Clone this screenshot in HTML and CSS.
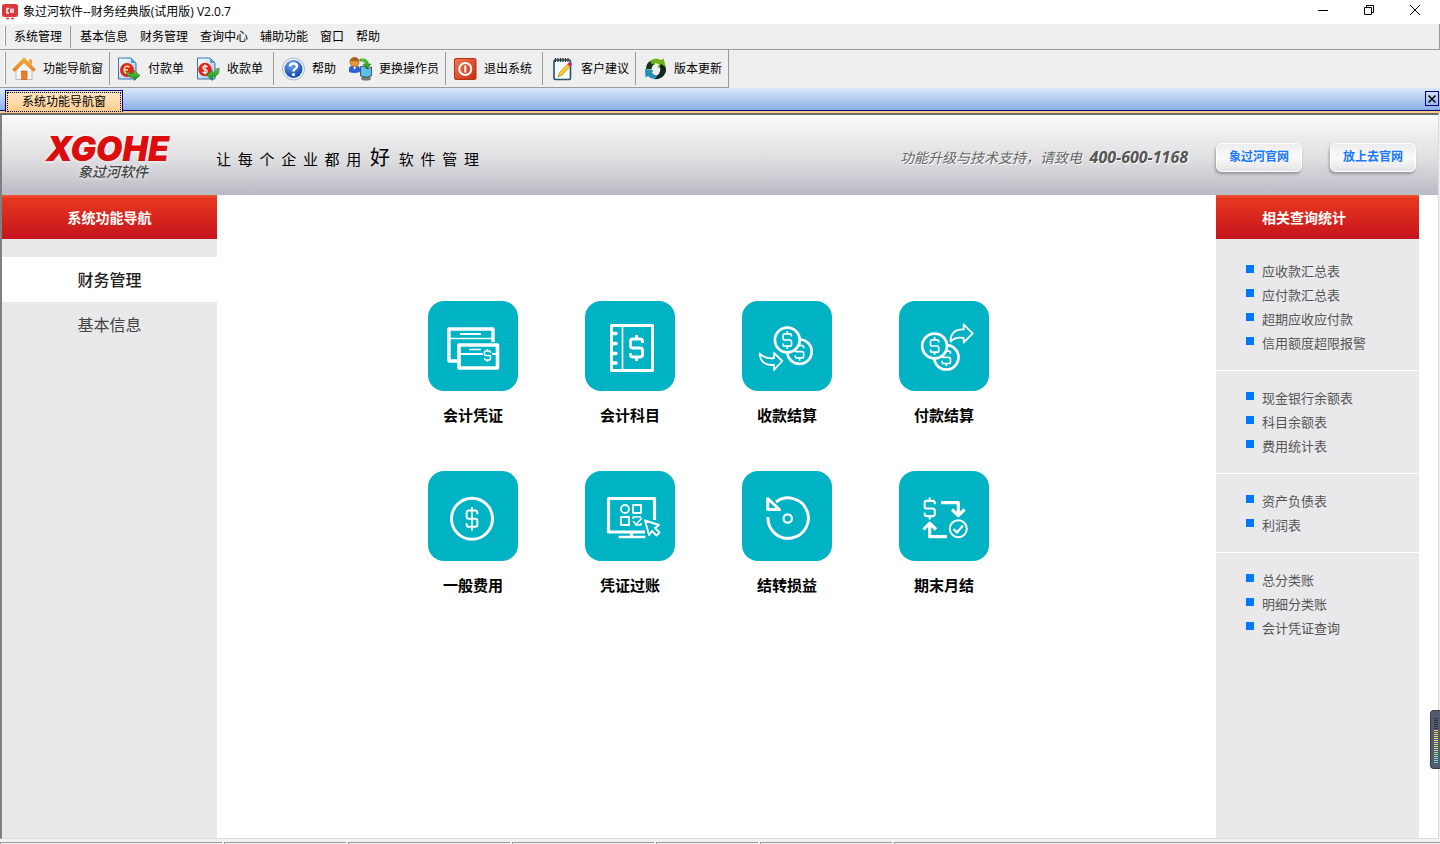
FILE: index.html
```html
<!DOCTYPE html>
<html lang="zh-CN">
<head>
<meta charset="utf-8">
<title>象过河软件--财务经典版(试用版) V2.0.7</title>
<link rel="stylesheet" href="styles.css">
</head>
<body>
<svg class="defs" aria-hidden="true">
  <defs>
    <linearGradient id="gRoof" x1="0" y1="0" x2="0" y2="1"><stop offset="0" stop-color="#ffb52e"/><stop offset="1" stop-color="#f07818"/></linearGradient>
    <linearGradient id="gPage" x1="0" y1="0" x2="1" y2="1"><stop offset="0" stop-color="#ffffff"/><stop offset="1" stop-color="#9cc4ee"/></linearGradient>
    <linearGradient id="gGreen" x1="0" y1="0" x2="0" y2="1"><stop offset="0" stop-color="#6fd23c"/><stop offset="1" stop-color="#0f8a1c"/></linearGradient>
    <radialGradient id="gBlue" cx=".4" cy=".25" r=".8"><stop offset="0" stop-color="#6fa4f0"/><stop offset="1" stop-color="#0a3fae"/></radialGradient>
    <linearGradient id="gRed" x1="0" y1="0" x2="1" y2="1"><stop offset="0" stop-color="#f2795a"/><stop offset="1" stop-color="#c92c0a"/></linearGradient>
    <symbol id="dollar" viewBox="0 0 14 26" overflow="visible"><path d="M13 8V6.500Q13 4 10.500 4H3.500Q1 4 1 6.500V10.500Q1 13 3.500 13H10.500Q13 13 13 15.500V19.500Q13 22 10.500 22H3.500Q1 22 1 19.500V18M7 4V0M7 22V26" fill="none"/></symbol>
  </defs>
</svg>

<header class="titlebar">
  <svg class="app-icon" viewBox="0 0 16 16"><rect width="16" height="13" rx="2.500" fill="#d8393c"/><path d="M7 4.500H5V9H7M9 4.500V9M11 4.500V9M9 6.500H8" fill="none" stroke="#fff" stroke-width="1.400"/><path d="M4 14.500H7M9 14.500H12" stroke="#d8393c" stroke-width="1.500"/></svg>
  <h1>象过河软件--财务经典版(试用版) V2.0.7</h1>
  <div class="win-controls">
    <button aria-label="最小化"><svg viewBox="0 0 12 12"><path d="M1 6.500H11"/></svg></button>
    <button aria-label="还原"><svg viewBox="0 0 12 12"><path d="M1.500 3.500H8.500V10.500H1.500ZM3.500 3.500V1.500H10.500V8.500H8.500"/></svg></button>
    <button aria-label="关闭"><svg viewBox="0 0 12 12"><path d="M1 1L11 11M11 1L1 11"/></svg></button>
  </div>
</header>

<nav class="menubar">
  <span class="grip"></span>
  <button>系统管理</button>
  <span class="menu-sep"></span>
  <button>基本信息</button>
  <button>财务管理</button>
  <button>查询中心</button>
  <button>辅助功能</button>
  <button>窗口</button>
  <button>帮助</button>
</nav>

<div class="toolbar-row">
  <div class="toolbar">
    <span class="grip"></span>
    <div class="group">
      <button><svg viewBox="0 0 24 24"><path d="M4 12L12 5L20 12V22.500H4Z" fill="#f4f4f6" stroke="#b9bbc4"/><path d="M17 2.500H20V8L17 5Z" fill="#f0a030"/><rect x="9.500" y="14" width="5.500" height="8.500" fill="#f07a20" stroke="#c65a10" stroke-width=".6"/><path d="M12 .8L.6 12.500L2.600 14.500L12 5.500L21.400 14.500L23.400 12.500Z" fill="url(#gRoof)" stroke="#e2801c" stroke-width=".6"/></svg>功能导航窗</button>
    </div>
    <div class="group roomy">
      <button><svg viewBox="0 0 24 24"><path d="M1.500 1H14L19 6V22H1.500Z" fill="url(#gPage)" stroke="#3a72b8"/><path d="M14 1V6H19Z" fill="#5c9ae0"/><circle cx="10" cy="13" r="7" fill="#e02818"/><path d="M12.500 10Q9 8 7.500 11V15Q9.500 17.500 12 16M6.500 13H11" fill="none" stroke="#ffe9a8" stroke-width="1.500"/><path d="M9 14Q12 18 17 16.500V13.500L23 18.500L17 23.500V20.500Q10 21 9 14Z" fill="url(#gGreen)" stroke="#137a1c" stroke-width=".6"/></svg>付款单</button>
      <button><svg viewBox="0 0 24 24"><path d="M1.500 1H14L19 6V22H1.500Z" fill="url(#gPage)" stroke="#3a72b8"/><path d="M14 1V6H19Z" fill="#5c9ae0"/><circle cx="9" cy="12.500" r="6.800" fill="#e02818"/><path d="M11.500 10Q9 8 7 10Q6.500 12 9 12.500Q12 13 11 15Q9 17 6.500 15M9 7.500V17.500" fill="none" stroke="#fff" stroke-width="1.200"/><path d="M23 11Q24 19 16.500 20V23.500L10.500 18L16.500 13.500V16.500Q20 16 20.500 12Z" fill="url(#gGreen)" stroke="#137a1c" stroke-width=".6"/></svg>收款单</button>
    </div>
    <div class="group">
      <button><svg viewBox="0 0 24 24"><circle cx="12.500" cy="12" r="11" fill="#f2f5fb" stroke="#a8b4cc"/><circle cx="12.500" cy="12" r="9" fill="url(#gBlue)"/><path d="M9 9.500Q9 6.500 12.500 6.500Q16 6.500 16 9.300Q16 11 14 12Q12.500 12.800 12.500 14.500" fill="none" stroke="#fff" stroke-width="2.500"/><circle cx="12.500" cy="17.600" r="1.600" fill="#fff"/></svg>帮助</button>
      <button><svg viewBox="0 0 24 24"><path d="M1 15V12Q1 9 4 9H9Q12 9 12 12V15Q6 17 1 15Z" fill="#2f62d8"/><path d="M5 9L6.500 13L8.500 9Z" fill="#fff"/><circle cx="6.500" cy="5" r="4.500" fill="#e89a3c" stroke="#a85c14" stroke-width=".8"/><path d="M2 4Q3 0 7 .5Q11 1 11 4.500Q6 4 2 4Z" fill="#a8641c"/><path d="M12 2Q20 1 20.500 7H23L19 12L15 7H17.500Q17 4 12 4Z" fill="url(#gGreen)" stroke="#137a1c" stroke-width=".5"/><ellipse cx="18" cy="21.500" rx="5" ry="2" fill="#777"/><path d="M12.500 9.500L16 9L19 12L23.500 10V19Q18 21.500 12.500 19Z" fill="#5cc0e8" stroke="#445" stroke-width=".9"/></svg>更换操作员</button>
    </div>
    <div class="group roomy">
      <button><svg viewBox="0 0 24 24"><rect x="1.500" y="1.500" width="21.500" height="21" rx="1.500" fill="url(#gRed)" stroke="#b8300c"/><circle cx="12.300" cy="12" r="6" fill="none" stroke="#fff" stroke-width="2"/><path d="M12.300 8.500V15.500" stroke="#fff" stroke-width="2"/></svg>退出系统</button>
    </div>
    <div class="group">
      <button><svg viewBox="0 0 24 24"><rect x="4" y="3" width="16.500" height="19.500" rx="1.500" fill="#f6fbfd" stroke="#1f5466" stroke-width="1.600"/><path d="M5.500 1V5M8 1V5M10.500 1V5M13 1V5M15.500 1V5M18 1V5" stroke="#333" stroke-width="1.200"/><path d="M8 20L9.500 15.500L17.500 7L20 9.500L12 18Z" fill="#f8cc28" stroke="#a87a10" stroke-width=".6"/><path d="M17.500 7L19.500 5Q22 5.500 22 7.500L20 9.500Z" fill="#e01878"/></svg>客户建议</button>
    </div>
    <div class="group">
      <button><svg viewBox="0 0 24 24"><path d="M3 12A10 9.500 0 0 1 8 3.500L12 7Q8.500 8.500 8.500 12.500Z" fill="#16381a"/><path d="M7 4Q12-.5 18 3L20.500 1.500L23 10.500H14.500L16 7.500Q12 5 9 7.500Z" fill="#6fb41c"/><path d="M18.500 7L22.800 10.500Q24 17 18.500 20.500Q15 23 11 22L14 18.500Q19 15 16.500 9Z" fill="#15251b"/><path d="M2 12L10.500 13.500L8.800 15.500Q11 19 15 18L12 22Q8 22.500 5 19L2.500 20.500Z" fill="#2490b8"/></svg>版本更新</button>
    </div>
  </div>
</div>

<div class="tabbar">
  <button class="tab"><span>系统功能导航窗</span></button>
  <button class="tab-close" aria-label="关闭标签"><svg viewBox="0 0 12 12"><path d="M2.500 2.500L9.500 9.500M9.500 2.500L2.500 9.500"/></svg></button>
</div>

<div class="workspace">
  <header class="banner">
    <div class="brand"><strong>XGOHE</strong><em>象过河软件</em></div>
    <p class="slogan">让&nbsp; 每&nbsp; 个&nbsp; 企&nbsp; 业&nbsp; 都&nbsp; 用&nbsp; <big>好</big>&nbsp; 软&nbsp; 件&nbsp; 管&nbsp; 理</p>
    <p class="support">功能升级与技术支持，请致电 <b>400-600-1168</b></p>
    <div class="links"><a href="#">象过河官网</a><a href="#">放上去官网</a></div>
  </header>
  <div class="columns">
    <nav class="sidebar">
      <h2>系统功能导航</h2>
      <a class="active" href="#">财务管理</a>
      <a href="#">基本信息</a>
    </nav>
    <main>
      <div class="tiles">
        <a href="#"><svg viewBox="0 0 90 90"><path d="M29 60H21V28H65V41" stroke-width="3.400"/><path d="M22 37.500H65" stroke-width="1.400"/><path d="M32 33H53" stroke-width="2.200"/><rect x="31" y="44" width="38.500" height="23" stroke-width="3.600"/><path d="M32 53H55M64 53H69" stroke-width="1.800"/><path d="M41 48.500H53" stroke-width="1.400"/><use href="#dollar" x="56" y="48" width="7" height="13" stroke-width="3"/></svg>会计凭证</a>
        <a href="#"><svg viewBox="0 0 90 90"><rect x="26.500" y="24.500" width="41" height="45" stroke-width="3"/><path d="M37.500 25V69" stroke-width="1.600"/><path d="M27 32.500H31M27 42.500H31M27 52.500H31M27 62H31" stroke-width="3.600" stroke-linecap="round"/><use href="#dollar" x="44.500" y="34" width="14" height="26" stroke-width="3"/></svg>会计科目</a>
        <a href="#"><svg viewBox="0 0 90 90"><circle cx="57.500" cy="50.700" r="12.200" stroke-width="2.700"/><use href="#dollar" x="52.500" y="41.700" width="10" height="18" stroke-width="2.400"/><circle class="coin" cx="45.300" cy="39" r="12.400" stroke-width="2.700"/><use href="#dollar" x="40.300" y="30" width="10" height="18" stroke-width="2.500"/><path d="M17.700 52.300Q23 58.500 32 57V52L40.300 60L32 69V63.800C24 65 18 61 17.700 52.300Z" stroke-width="1.800"/></svg>收款结算</a>
        <a href="#"><svg viewBox="0 0 90 90"><circle cx="47.300" cy="56.300" r="12.200" stroke-width="2.700"/><use href="#dollar" x="42.300" y="47.300" width="10" height="18" stroke-width="2.400"/><circle class="coin" cx="35.600" cy="45" r="12.400" stroke-width="2.700"/><use href="#dollar" x="30.600" y="36" width="10" height="18" stroke-width="2.500"/><path d="M51.700 40.700Q56 35.500 64.700 37V41.700L73.700 32.300L64.700 23.500V28.500C56 28 51 33 51.700 40.700Z" stroke-width="1.800"/></svg>付款结算</a>
        <a href="#"><svg viewBox="0 0 90 90"><circle cx="44" cy="47.700" r="20.500" stroke-width="3"/><use href="#dollar" x="37.700" y="35.700" width="12.600" height="24" stroke-width="2.200"/><path d="M44 38V58" stroke-width="1.600"/></svg>一般费用</a>
        <a href="#"><svg viewBox="0 0 90 90"><path d="M69.500 49V27.500H23.500V61H60M46.500 61V66" stroke-width="3.200"/><path d="M33.500 66H60.500" stroke-width="2.600"/><circle cx="40" cy="38" r="4" stroke-width="1.800"/><path d="M48 34H56V42H48ZM36 46H44V54H36Z" stroke-width="1.800"/><path d="M48 48V46H56M50 54H56V52M48 50L51 53.500L57 47" stroke-width="1.400"/><path d="M60 49.500L74 54L70 57L74.500 61.500L71.500 64.500L67 60L64 64Z" stroke-width="1.900"/></svg>凭证过账</a>
        <a href="#"><svg viewBox="0 0 90 90"><path d="M26 46A20.200 20.200 0 1 0 34 31" stroke-width="3"/><path d="M25.700 27.500V38.500H37.500Z" stroke-width="3"/><circle cx="45.700" cy="47.500" r="4.200" stroke-width="2.200"/></svg>结转损益</a>
        <a href="#"><svg viewBox="0 0 90 90"><use href="#dollar" x="24.700" y="26.500" width="12" height="22" stroke-width="2.400"/><path d="M42 31.700H59.300V43M53 38.500L59.300 44.700L65.500 38.500M48 65.700H30.700V53M24.500 58.500L30.700 52.200L37 58.500" stroke-width="3.200"/><circle cx="59.300" cy="57.700" r="8.500" stroke-width="2"/><path d="M54.500 58L58 61.500L64 54.500" stroke-width="2.200"/></svg>期末月结</a>
      </div>
    </main>
    <aside class="reports">
      <h2>相关查询统计</h2>
      <ul><li><a href="#">应收款汇总表</a></li><li><a href="#">应付款汇总表</a></li><li><a href="#">超期应收应付款</a></li><li><a href="#">信用额度超限报警</a></li></ul>
      <ul><li><a href="#">现金银行余额表</a></li><li><a href="#">科目余额表</a></li><li><a href="#">费用统计表</a></li></ul>
      <ul><li><a href="#">资产负债表</a></li><li><a href="#">利润表</a></li></ul>
      <ul><li><a href="#">总分类账</a></li><li><a href="#">明细分类账</a></li><li><a href="#">会计凭证查询</a></li></ul>
    </aside>
  </div>
</div>

<footer class="statusbar"><span></span><span></span><span></span><span></span><span></span><span></span><span></span></footer>
<div class="meter"><i></i></div>
</body>
</html>
```

FILE: styles.css
```css
* { box-sizing: border-box; }

body {
  margin: 0;
  min-height: 100vh;
  display: flex;
  flex-direction: column;
  background: #efefef;
  color: #000;
  font: 12px/18px "Open Sans", "Noto Sans CJK SC", sans-serif;
}

h1, h2, p, ul { margin: 0; padding: 0; font: inherit; }
ul { list-style: none; }
a { color: inherit; text-decoration: none; }
button { margin: 0; padding: 0; border: 0; background: none; color: inherit; font: inherit; white-space: nowrap; }
svg { display: block; flex: none; }
.defs { position: absolute; width: 0; height: 0; }

/* Title bar */
.titlebar { display: flex; align-items: center; height: 24px; padding-left: 2px; background: #fff; }
.app-icon { width: 16px; height: 16px; margin-right: 5px; }
.win-controls { display: flex; margin-left: auto; align-self: stretch; padding: 0 2px 4px 0; }
.win-controls button { display: grid; place-items: center; width: 46px; }
.win-controls svg, .tab-close svg { width: 12px; height: 12px; fill: none; stroke: #000; }

/* Menu bar */
.menubar {
  display: flex;
  align-items: center;
  height: 26px;
  padding-left: 4px;
  border-right: 1px solid #9a9a9a;
  border-bottom: 1px solid #9a9a9a;
}
.menubar button { padding: 0 6px; }
.menu-sep { width: 1px; height: 22px; margin: 0 3px 0 2px; background: #9a9a9a; }
.grip { align-self: stretch; width: 2px; margin: 2px 2px 3px 0; border-left: 1px solid #fff; border-right: 1px solid #9a9a9a; }

/* Toolbar */
.toolbar-row { display: flex; height: 38px; }
.toolbar { display: flex; padding-left: 4px; border-right: 1px solid #9a9a9a; border-bottom: 1px solid #9a9a9a; }
.toolbar .grip { margin-right: 0; }
.group { display: flex; align-items: center; position: relative; }
.group + .group { border-left: 1px solid #fff; padding-left: 1px; }
.group + .group::before { content: ""; position: absolute; left: -1px; top: 2px; bottom: 2px; width: 1px; background: #9a9a9a; }
.group.roomy { padding-right: 4px; }
.group button { display: flex; align-items: center; gap: 7px; padding: 0 6px; }
.group svg { width: 24px; height: 24px; }

/* Tabs */
.tabbar {
  display: flex;
  justify-content: space-between;
  height: 25px;
  padding: 2px 1px 0 5px;
  background: linear-gradient(#dce9fb, #8aaee4 22px, #000080 22px, #000080 23px, #ffcb8c 23px);
}
.tab { height: 22px; padding: 1px; border: 1px solid #000080; border-bottom: 0; background: linear-gradient(#ffe9c8, #ffcb8c); }
.tab span { display: block; padding: 0 14px; border: 1px dotted #000; }
.tab-close { display: grid; place-items: center; width: 14px; height: 15px; margin-top: 1px; border: 1px solid #000080; }
.tab-close svg { stroke-width: 1.5; }

/* Document area */
.workspace {
  flex: 1;
  display: flex;
  flex-direction: column;
  border: 2px solid #6c6c6c;
  border-left-color: #808080;
  border-right: 1px solid #dcdcdc;
  border-bottom: 1px solid #dcdcdc;
  margin-right: 1px;
  background: #fff;
}
.banner {
  display: flex;
  align-items: center;
  height: 80px;
  padding: 5px 22px 0 44px;
  background: linear-gradient(#fff 3px, #f8f8f9 3px, #dedee1 45px, #babac4);
}
.brand { display: flex; flex-direction: column; width: 126px; font-style: italic; text-shadow: 0 0 4px #fff; }
.brand strong { font: italic 900 34px/28px Inter, sans-serif; color: #dc0d0d; }
.brand em { padding-left: 32px; font-size: 14px; line-height: 18px; font-weight: 500; color: #444; }
.slogan { flex: 1; margin-left: 44px; font: 15px/24px "Noto Sans CJK SC", sans-serif; }
.slogan big { margin: 0 2px; font-size: 20px; }
.support { margin-right: 28px; font-size: 14px; font-style: italic; color: #666; text-shadow: 1px 1px 0 #fff; white-space: nowrap; }
.support b { margin-left: 4px; font-size: 16px; color: #555; }
.links { display: flex; gap: 28px; }
.links a {
  width: 86px;
  padding: 4px 0 5px;
  border: 1px solid #fff;
  border-radius: 6px;
  background: linear-gradient(#ececee, #fafafa 50%, #e4e4e6);
  box-shadow: -1px 2px 3px rgba(0, 0, 0, .3);
  color: #1878ff;
  font-weight: bold;
  text-align: center;
}

.columns { flex: 1; display: flex; padding-right: 19px; }
h2 {
  height: 44px;
  background: linear-gradient(#ee5a34, #e93820 3px, #c4141c);
  color: #fff;
  font-size: 14px;
  line-height: 46px;
  font-weight: bold;
}
.sidebar { width: 215px; background: #e9e9eb; text-align: center; }
.sidebar h2 { margin-bottom: 18px; }
.sidebar a { display: block; padding-top: 1px; color: #444; font-size: 16px; line-height: 44px; }
.sidebar .active { background: #fff; color: #222; font-weight: 500; }

main { flex: 1; padding: 106px 16px 40px 0; }
.tiles { display: grid; grid-template-columns: repeat(4, 90px); gap: 44px 67px; justify-content: center; }
.tiles a { display: flex; flex-direction: column; align-items: center; gap: 12px; font-size: 15px; line-height: 24px; font-weight: bold; }
.tiles svg { width: 90px; height: 90px; border-radius: 16px; background: #00b3c4; fill: none; stroke: #fff; stroke-linejoin: round; }
.tiles .coin { fill: #00b3c4; }

.reports { width: 203px; background: #e9e9eb; }
.reports h2 { margin-bottom: 5px; padding-left: 46px; }
.reports ul { padding: 15px 0 15px 30px; color: #555; font-size: 13px; line-height: 24px; }
.reports ul + ul { border-top: 1px solid #fff; }
.reports li { display: flex; gap: 8px; }
.reports li::before { content: ""; width: 8px; height: 8px; margin-top: 6px; background: #0078ff; }

/* Status bar */
.statusbar { display: grid; grid-template-columns: 222px 122px 162px 142px 102px 132px 1fr; column-gap: 2px; height: 5px; padding-top: 3px; background: #f3f3f3; }
.statusbar span { border-top: 1px solid #9a9a9a; border-left: 1px solid #9a9a9a; }

/* Level meter docked on the screen edge */
.meter { position: absolute; right: 0; top: 710px; width: 10px; height: 59px; padding: 7px 2px 7px 3px; border: 1px solid #383c48; border-right: 0; border-radius: 4px 0 0 4px; background: #555b6c; }
.meter i {
  display: block;
  height: 45px;
  background:
    repeating-linear-gradient(transparent 0 1px, #555b6c 1px 2px),
    linear-gradient(#2e323e 12px, #f0c070 12px, #e8e070 22px, #a8e890 32px, #60e0d8);
}
```
